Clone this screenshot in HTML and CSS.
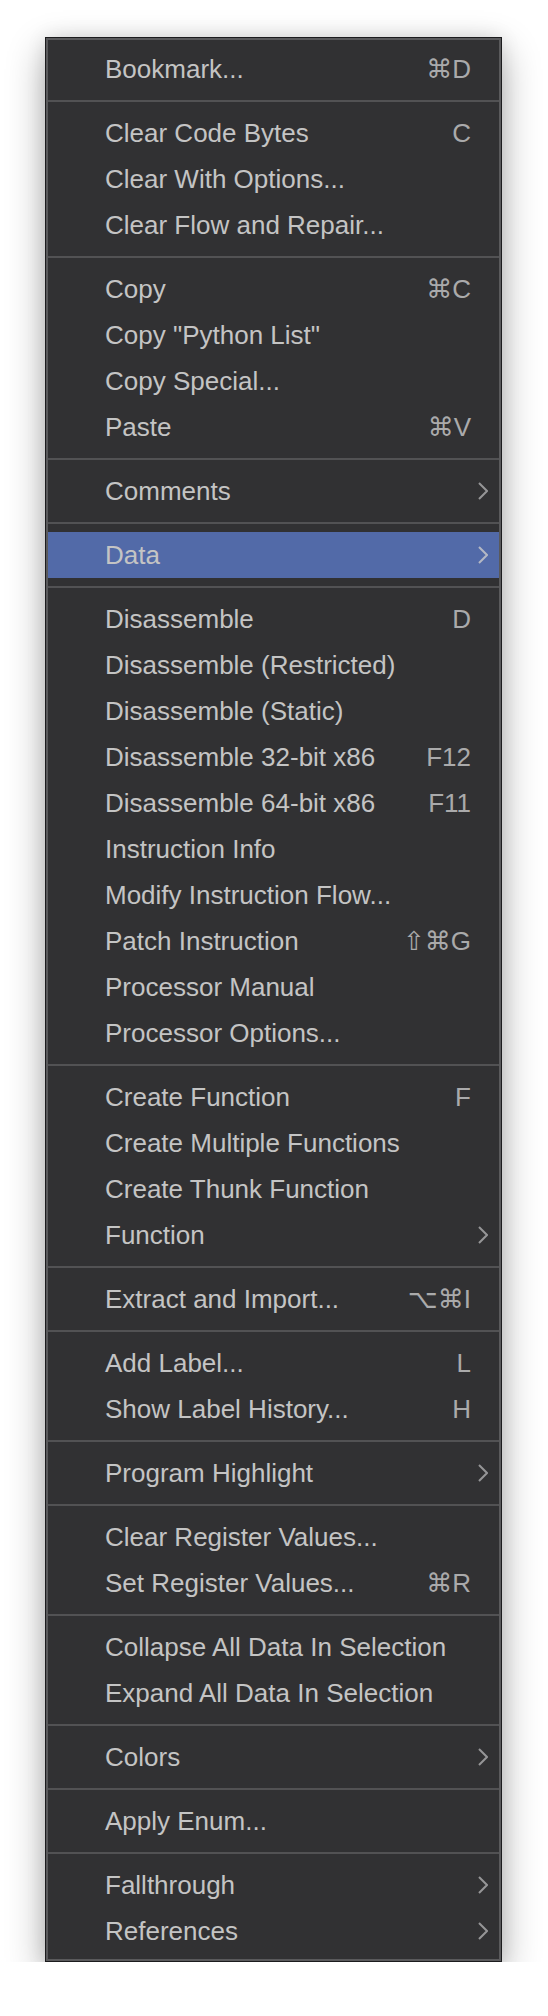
FILE: index.html
```html
<!DOCTYPE html>
<html lang="en">
<head>
<meta charset="utf-8">
<title>Context Menu</title>
<link rel="stylesheet" href="styles.css">
</head>
<body>
<div class="menu">
  <div class="menu-inner">
    <div class="item"><span class="label">Bookmark...</span><span class="key">⌘D</span></div>
    <div class="sep"></div>
    <div class="item"><span class="label">Clear Code Bytes</span><span class="key">C</span></div>
    <div class="item"><span class="label">Clear With Options...</span></div>
    <div class="item"><span class="label">Clear Flow and Repair...</span></div>
    <div class="sep"></div>
    <div class="item"><span class="label">Copy</span><span class="key">⌘C</span></div>
    <div class="item"><span class="label">Copy "Python List"</span></div>
    <div class="item"><span class="label">Copy Special...</span></div>
    <div class="item"><span class="label">Paste</span><span class="key">⌘V</span></div>
    <div class="sep"></div>
    <div class="item sub"><span class="label">Comments</span><svg class="chev" viewBox="0 0 10 18"><path d="M1 1 L9 9 L1 17"/></svg></div>
    <div class="sep"></div>
    <div class="item sub active"><span class="label">Data</span><svg class="chev" viewBox="0 0 10 18"><path d="M1 1 L9 9 L1 17"/></svg></div>
    <div class="sep"></div>
    <div class="item"><span class="label">Disassemble</span><span class="key">D</span></div>
    <div class="item"><span class="label">Disassemble (Restricted)</span></div>
    <div class="item"><span class="label">Disassemble (Static)</span></div>
    <div class="item"><span class="label">Disassemble 32-bit x86</span><span class="key">F12</span></div>
    <div class="item"><span class="label">Disassemble 64-bit x86</span><span class="key">F11</span></div>
    <div class="item"><span class="label">Instruction Info</span></div>
    <div class="item"><span class="label">Modify Instruction Flow...</span></div>
    <div class="item"><span class="label">Patch Instruction</span><span class="key">⇧⌘G</span></div>
    <div class="item"><span class="label">Processor Manual</span></div>
    <div class="item"><span class="label">Processor Options...</span></div>
    <div class="sep"></div>
    <div class="item"><span class="label">Create Function</span><span class="key">F</span></div>
    <div class="item"><span class="label">Create Multiple Functions</span></div>
    <div class="item"><span class="label">Create Thunk Function</span></div>
    <div class="item sub"><span class="label">Function</span><svg class="chev" viewBox="0 0 10 18"><path d="M1 1 L9 9 L1 17"/></svg></div>
    <div class="sep"></div>
    <div class="item"><span class="label">Extract and Import...</span><span class="key">⌥⌘I</span></div>
    <div class="sep"></div>
    <div class="item"><span class="label">Add Label...</span><span class="key">L</span></div>
    <div class="item"><span class="label">Show Label History...</span><span class="key">H</span></div>
    <div class="sep"></div>
    <div class="item sub"><span class="label">Program Highlight</span><svg class="chev" viewBox="0 0 10 18"><path d="M1 1 L9 9 L1 17"/></svg></div>
    <div class="sep"></div>
    <div class="item"><span class="label">Clear Register Values...</span></div>
    <div class="item"><span class="label">Set Register Values...</span><span class="key">⌘R</span></div>
    <div class="sep"></div>
    <div class="item"><span class="label">Collapse All Data In Selection</span></div>
    <div class="item"><span class="label">Expand All Data In Selection</span></div>
    <div class="sep"></div>
    <div class="item sub"><span class="label">Colors</span><svg class="chev" viewBox="0 0 10 18"><path d="M1 1 L9 9 L1 17"/></svg></div>
    <div class="sep"></div>
    <div class="item"><span class="label">Apply Enum...</span></div>
    <div class="sep"></div>
    <div class="item sub"><span class="label">Fallthrough</span><svg class="chev" viewBox="0 0 10 18"><path d="M1 1 L9 9 L1 17"/></svg></div>
    <div class="item sub"><span class="label">References</span><svg class="chev" viewBox="0 0 10 18"><path d="M1 1 L9 9 L1 17"/></svg></div>
  </div>
</div>
</body>
</html>
```
FILE: styles.css
```css
html, body {
  margin: 0;
  padding: 0;
  background: #ffffff;
}

body {
  padding: 37px 0 0 45px;
  font-family: "Liberation Sans", Arial, "DejaVu Sans", sans-serif;
}

.menu {
  box-sizing: border-box;
  width: 457px;
  border: 1px solid #1c1c1e;
  background: #313133;
  box-shadow: 0 14px 36px rgba(0, 0, 0, 0.32), 0 0 18px rgba(0, 0, 0, 0.10);
}

.menu-inner {
  border: 2px solid #5a5a5c;
  padding: 6px 0 5px;
}

.item {
  display: flex;
  align-items: center;
  justify-content: space-between;
  height: 46px;
  padding: 0 28px 0 57px;
  font-size: 26px;
  color: #c4c4c4;
  white-space: nowrap;
}

.item.sub {
  padding-right: 11px;
}

.item.active {
  background: #526aa8;
}

.key {
  color: #aaaaab;
  font-family: "Liberation Sans", "DejaVu Sans", sans-serif;
}

.chev {
  width: 10px;
  height: 18px;
  flex: none;
}

.chev path {
  fill: none;
  stroke: #959597;
  stroke-width: 2;
}

.active .chev path {
  stroke: #b4b8c4;
}

.sep {
  height: 18px;
  display: flex;
  align-items: center;
}

.sep::before {
  content: "";
  display: block;
  width: 100%;
  height: 2px;
  background: #525254;
}
```
